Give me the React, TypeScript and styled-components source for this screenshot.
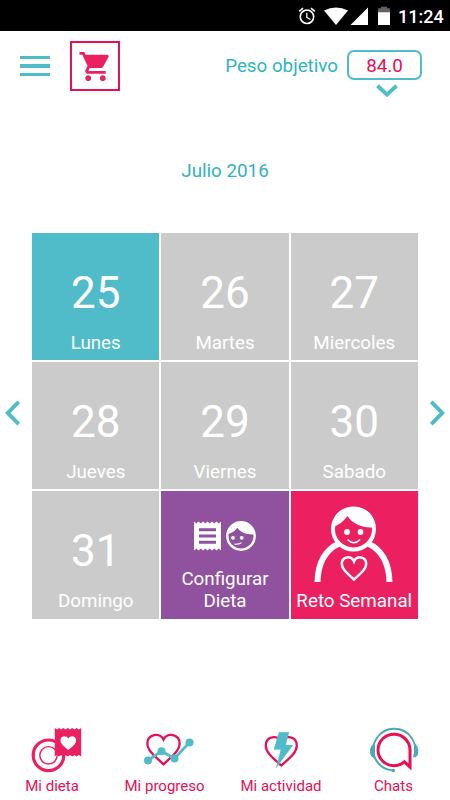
import React from "react";
import styled, { createGlobalStyle } from "styled-components";
import { MdAlarm, MdShoppingCart } from "react-icons/md";

const TEAL = "#2fb4c2";
const TEAL_FILL = "#50bcca";
const PINK = "#ea0e55";
const PINK_FILL = "#ec1f60";
const PURPLE = "#90529f";
const GREY = "#cbcbcb";

const GlobalStyle = createGlobalStyle`
  * { box-sizing: border-box; }
  body { margin: 0; background: #fff; font-family: Roboto, "Liberation Sans", sans-serif; }
  svg { display: block; flex: none; }
  button { font: inherit; background: none; border: 0; padding: 0; }
`;

const Screen = styled.div`
  width: 450px;
  height: 800px;
  display: flex;
  flex-direction: column;
  overflow: hidden;
  background: #fff;
`;

const StatusBar = styled.div`
  height: 31px;
  flex: none;
  background: #000;
  color: #fff;
  display: flex;
  align-items: center;
  padding-left: 297px;
`;

const StatusGlyphs = styled.svg`
  width: 74px;
  height: 20px;
  margin-left: 3px;
`;

const Clock = styled.span`
  margin-left: 4px;
  font-size: 18px;
  font-weight: 500;
  line-height: 20px;
  padding-top: 2px;
  white-space: nowrap;
`;

const Header = styled.header`
  height: 73px;
  flex: none;
  display: flex;
  align-items: flex-start;
  padding: 10px 28px 0 20px;
`;

const MenuButton = styled.button`
  width: 30px;
  display: flex;
  flex-direction: column;
  gap: 5px;
  margin-top: 15px;
`;

const MenuLine = styled.span`
  height: 3.4px;
  background: ${TEAL_FILL};
`;

const CartButton = styled.button`
  width: 50px;
  height: 50px;
  margin-left: 20px;
  border: 2px solid ${PINK};
  color: ${PINK_FILL};
  display: flex;
  justify-content: center;
  padding-top: 6px;
`;

const Goal = styled.div`
  margin-left: auto;
  display: flex;
  gap: 9px;
`;

const GoalLabel = styled.span`
  font-size: 18.8px;
  line-height: 30px;
  margin-top: 10px;
  color: ${TEAL};
  white-space: nowrap;
`;

const GoalPicker = styled.div`
  width: 75px;
  margin-top: 9px;
  display: flex;
  flex-direction: column;
  align-items: center;
`;

const GoalValue = styled.div`
  width: 75px;
  height: 30px;
  margin-bottom: 4px;
  border: 2px solid ${TEAL_FILL};
  border-radius: 7px;
  text-align: center;
  font-size: 18.8px;
  line-height: 28px;
  color: ${PINK};
`;

const GoalArrow = styled.div`
  padding-left: 5px;
`;

const Month = styled.h1`
  margin: 55px 0 0;
  height: 24px;
  line-height: 24px;
  text-align: center;
  font-size: 18.8px;
  font-weight: 400;
  color: ${TEAL};
`;

const Calendar = styled.main`
  margin-top: 50px;
  padding: 0 5px;
  display: flex;
  align-items: flex-start;
  justify-content: space-between;
`;

const PageButton = styled.button`
  margin-top: 167px;
`;

const WeekGrid = styled.div`
  width: 386px;
  height: 385.5px;
  display: grid;
  grid-template-columns: repeat(3, 1fr);
  grid-template-rows: repeat(3, 1fr);
  gap: 1.8px;
`;

const Tile = styled.div<{ $color: string }>`
  background: ${(p) => p.$color};
  color: #fff;
  display: flex;
  flex-direction: column;
  align-items: center;
  justify-content: flex-end;
  padding-bottom: 6.5px;
`;

const DayNumber = styled.span`
  font-size: 44px;
  line-height: 50px;
  font-weight: 400;
  margin-bottom: 14px;
`;

const TileLabel = styled.span`
  font-size: 18.8px;
  line-height: 22px;
  text-align: center;
  white-space: pre-line;
`;

const TileIcons = styled.div`
  display: flex;
  align-items: center;
  gap: 5px;
  margin-bottom: 17px;
`;

const PersonIcon = styled.svg`
  width: 80px;
  height: 78px;
  margin-bottom: 8px;
`;

const BottomNav = styled.nav`
  margin-top: auto;
  height: 76px;
  display: grid;
  grid-template-columns: 104px 121px 112px 113px;
`;

const NavItem = styled.a`
  display: flex;
  flex-direction: column;
  align-items: center;
  color: ${PINK};
`;

const NavIcon = styled.svg<{ $shift: number }>`
  width: 60px;
  height: 50px;
  margin-left: ${(p) => p.$shift}px;
  overflow: visible;
`;

const NavLabel = styled.span`
  font-size: 15px;
  line-height: 20px;
  margin-top: 2px;
  white-space: nowrap;
`;

const Chevron = ({ dir }: { dir: "left" | "right" | "down" }) => {
  if (dir === "down")
    return (
      <svg width="22" height="14" viewBox="0 0 22 14">
        <path d="M1.5 1.8L11 10.6l9.5-8.8" fill="none" stroke={TEAL_FILL} strokeWidth="4" />
      </svg>
    );
  return (
    <svg width="15" height="26" viewBox="0 0 15 26">
      <path
        d={dir === "left" ? "M13.700 1.800L2.700 13l11 11.200" : "M1.300 1.800L12.300 13l-11 11.200"}
        fill="none"
        stroke={TEAL_FILL}
        strokeWidth="4"
      />
    </svg>
  );
};

const ReceiptIcon = () => (
  <svg width="27" height="30" viewBox="0 0 27 30">
    <path
      d="M0 .5l2.250 2L4.500.5l2.250 2L9 .5l2.250 2L13.500.5l2.250 2L18 .5l2.250 2L22.500.5l2.250 2L27 .5v29l-2.250-2-2.250 2-2.250-2-2.250 2-2.250-2-2.250 2-2.250-2-2.250 2-2.250-2-2.250 2-2.250-2L0 29.500z"
      fill="#fff"
    />
    <path d="M5 8.800h17M5 15h17M5 21.200h17" stroke={PURPLE} strokeWidth="2.900" />
  </svg>
);

const FaceIcon = () => (
  <svg width="30" height="30" viewBox="0 0 30 30">
    <circle cx="15" cy="15" r="13.7" fill="none" stroke="#fff" strokeWidth="2.4" />
    <path d="M2 12C3 5 9 1 15 1c8 0 13 6 13.6 12.4C21 14 14.500 11.600 11.300 6.800 9 10 6 12 2 13z" fill="#fff" />
    <circle cx="7" cy="16.8" r="1.9" fill="#fff" />
    <circle cx="15.700" cy="16.800" r="1.900" fill="#fff" />
    <path d="M8.500 23.200q4 .3 7-1.400" fill="none" stroke="#fff" strokeWidth="1.200" />
  </svg>
);

const days = [
  ["25", "Lunes"],
  ["26", "Martes"],
  ["27", "Miercoles"],
  ["28", "Jueves"],
  ["29", "Viernes"],
  ["30", "Sabado"],
  ["31", "Domingo"],
];

export default function App() {
  return (
    <Screen>
      <GlobalStyle />
      <StatusBar>
        <MdAlarm size={20} />
        <StatusGlyphs viewBox="0 0 74 20" fill="#fff">
          <path d="M4 4.500Q16 -1.500 28 4.500L16 19z" />
          <path d="M48 1.500V19H30.500z" />
          <path d="M58 5h12v14H58z" />
          <path d="M61 .7h6v1.500h3v4H58v-4h3z" fill="#626262" />
        </StatusGlyphs>
        <Clock>11:24</Clock>
      </StatusBar>

      <Header>
        <MenuButton aria-label="Menú">
          <MenuLine />
          <MenuLine />
          <MenuLine />
        </MenuButton>
        <CartButton aria-label="Compra">
          <MdShoppingCart size={35} />
        </CartButton>
        <Goal>
          <GoalLabel>Peso objetivo</GoalLabel>
          <GoalPicker>
            <GoalValue>84.0</GoalValue>
            <GoalArrow>
              <Chevron dir="down" />
            </GoalArrow>
          </GoalPicker>
        </Goal>
      </Header>

      <Month>Julio 2016</Month>

      <Calendar>
        <PageButton aria-label="Anterior">
          <Chevron dir="left" />
        </PageButton>
        <WeekGrid>
          {days.map(([num, name], i) => (
            <Tile key={num} $color={i === 0 ? TEAL_FILL : GREY}>
              <DayNumber>{num}</DayNumber>
              <TileLabel>{name}</TileLabel>
            </Tile>
          ))}
          <Tile $color={PURPLE}>
            <TileIcons>
              <ReceiptIcon />
              <FaceIcon />
            </TileIcons>
            <TileLabel>{"Configurar\nDieta"}</TileLabel>
          </Tile>
          <Tile $color={PINK_FILL}>
            <PersonIcon viewBox="0 0 80 78" fill="none" stroke="#fff">
              <circle cx="39.500" cy="25" r="20.500" strokeWidth="4" />
              <path d="M18.500 23C18.500 10 28 3 39.500 3S61 10 61 23C52 25 39 21 33.500 12 30 17 25 21 18.500 23z" fill="#fff" stroke="none" />
              <circle cx="33" cy="28" r="2.900" fill="#fff" stroke="none" />
              <circle cx="46.500" cy="28" r="2.900" fill="#fff" stroke="none" />
              <path d="M33.500 35.500q6.300 6.500 12.600 0" strokeWidth="1.600" />
              <path d="M3.500 78C4 59 11 46 25 39.500M75.500 78C75 59 68 46 54 39.500" strokeWidth="6" />
              <path d="M40 75.500C32 68.500 27.800 64.500 27.800 60c0-7.500 9.200-9 12.200-2.500C43 51 52.200 52.500 52.200 60c0 4.500-4.200 8.500-12.200 15.500z" strokeWidth="2.500" />
            </PersonIcon>
            <TileLabel>Reto Semanal</TileLabel>
          </Tile>
        </WeekGrid>
        <PageButton aria-label="Siguiente">
          <Chevron dir="right" />
        </PageButton>
      </Calendar>

      <BottomNav>
        <NavItem>
          <NavIcon $shift={8} viewBox="26 724 60 50" fill="none" stroke={PINK_FILL}>
            <circle cx="48.500" cy="755.300" r="15.300" strokeWidth="3.200" />
            <circle cx="48.500" cy="755.300" r="8.700" strokeWidth="1.400" />
            <path
              d="M54.800 728l2 1.500 2.200-1.500 2.200 1.500 2.200-1.500 2.200 1.500 2.200-1.500 2.200 1.500 2.200-1.500 2.200 1.500 2.200-1.500 2.200 1.500 2.400-1.500V756.500l-2.400-1.500-2.200 1.500-2.200-1.500-2.200 1.500-2.200-1.500-2.200 1.500-2.200-1.500-2.200 1.500-2.200-1.500-2.200 1.500-2.200-1.500-2 1.500z"
              fill={PINK_FILL}
              stroke="none"
            />
            <path d="M68.300 750c-5-4-7.800-6.300-7.800-9.500 0-5 6-5.500 7.800-1.800 1.800-3.700 7.800-3.200 7.800 1.800 0 3.200-2.800 5.500-7.800 9.500z" fill="#fff" stroke="none" />
          </NavIcon>
          <NavLabel>Mi dieta</NavLabel>
        </NavItem>
        <NavItem>
          <NavIcon $shift={6} viewBox="138 724 60 50" fill="none" stroke={PINK}>
            <path d="M163.500 764.300C153 755 147.400 750 147.400 743.500c0-9.500 12.500-11.500 16.100-3.900 3.600-7.600 16.100-5.600 16.100 3.900 0 6.500-5.600 11.500-16.100 20.800z" strokeWidth="2.300" />
            <path d="M148 760.500l13.500-9.300 13 7.200 15-16" stroke={TEAL_FILL} strokeWidth="2.800" />
            <g fill={TEAL_FILL} stroke="none">
              <circle cx="148" cy="760.500" r="4" />
              <circle cx="161.500" cy="751.200" r="4" />
              <circle cx="174.500" cy="758.400" r="4" />
              <circle cx="189.500" cy="742.400" r="4" />
            </g>
          </NavIcon>
          <NavLabel>Mi progreso</NavLabel>
        </NavItem>
        <NavItem>
          <NavIcon $shift={0} viewBox="251 724 60 50" fill="none" stroke={PINK}>
            <path d="M281.300 765.500C271 756.500 265.800 752 265.800 745.500c0-9.500 12.200-10.800 15.500-4 3.300-6.800 15.500-5.500 15.500 4 0 6.500-5.200 11-15.500 20z" strokeWidth="2.300" />
            <path d="M279 732.300h10L285.700 745H293l-16.800 23 4.600-18.400h-7z" fill={TEAL_FILL} stroke={TEAL_FILL} strokeWidth=".3" />
          </NavIcon>
          <NavLabel>Mi actividad</NavLabel>
        </NavItem>
        <NavItem>
          <NavIcon $shift={1} viewBox="364 724 60 50" fill="none" stroke={PINK}>
            <path d="M374.500 757A21 21 0 1 1 414 757M374.500 757Q380 769.500 393 770.500" stroke="#48aaba" strokeWidth="2" />
            <path d="M375 743.500q-5 1.500-5 7.500t5 7.500zM414 743.500q4.300 1.500 4.300 7.500t-4.300 6.500z" fill="#48aaba" stroke="none" />
            <circle cx="393.300" cy="770.500" r="1.800" fill="#48aaba" stroke="none" />
            <path d="M410 750v17l-5.600-5.200q-5 4-10.600 4a16 15.800 0 1 1 16.200-15.800z" strokeWidth="3" />
          </NavIcon>
          <NavLabel>Chats</NavLabel>
        </NavItem>
      </BottomNav>
    </Screen>
  );
}
